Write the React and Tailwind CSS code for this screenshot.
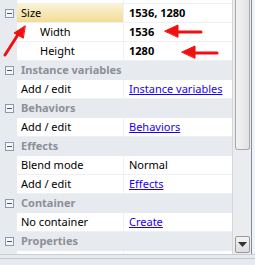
const rows = [
    { type: "prop", name: "Size", value: "1536, 1280", bold: true, selected: true, expand: true },
    { type: "prop", name: "Width", value: "1536", bold: true, indent: true },
    { type: "prop", name: "Height", value: "1280", bold: true, indent: true },
    { type: "cat", name: "Instance variables" },
    { type: "prop", name: "Add / edit", value: "Instance variables", link: true },
    { type: "cat", name: "Behaviors" },
    { type: "prop", name: "Add / edit", value: "Behaviors", link: true },
    { type: "cat", name: "Effects" },
    { type: "prop", name: "Blend mode", value: "Normal" },
    { type: "prop", name: "Add / edit", value: "Effects", link: true },
    { type: "cat", name: "Container" },
    { type: "prop", name: "No container", value: "Create", link: true },
    { type: "cat", name: "Properties" },
];

const MinusBox = () => (
    <div className="w-[9px] h-[9px] border border-[#8b98ad] bg-[#f4f6f9] flex items-center justify-center">
        <div className="w-[5px] h-px bg-[#4a5565]" />
    </div>
);

const Row = ({ row }) => {
    if (row.type === "cat") {
        return (
            <div className="flex h-[19px] bg-[#e7eaef] items-center">
                <div className="w-[17px] shrink-0 flex justify-center pl-px">
                    <MinusBox />
                </div>
                <span className="pl-[4px] font-bold text-[#8d9096]">{row.name}</span>
            </div>
        );
    }
    return (
        <div className="flex h-[19px]">
            <div className="w-[17px] shrink-0 bg-[#e7eaef] flex items-center justify-center pl-px">
                {row.expand && <MinusBox />}
            </div>
            <div
                className={
                    "w-[106px] shrink-0 flex items-center border-b border-[#eef0f2] " +
                    (row.selected ? "bg-gradient-to-b from-[#fbf2d4] to-[#f2dc95] " : "bg-white ") +
                    (row.indent ? "pl-[23px]" : "pl-[4px]")
                }
            >
                {row.name}
            </div>
            <div className="w-px shrink-0 bg-[#eef0f2]" />
            <div className="flex-1 bg-white flex items-center pl-[5px] border-b border-[#eef0f2]">
                {row.link ? (
                    <span className="text-[#1a00f5] underline underline-offset-[1px]">{row.value}</span>
                ) : (
                    <span className={row.bold ? "font-bold" : ""}>{row.value}</span>
                )}
            </div>
        </div>
    );
};

const Arrows = () => (
    <svg className="absolute inset-0 pointer-events-none" width="255" height="265">
        <g stroke="#f01010" strokeWidth="3" strokeLinecap="round" fill="#f01010">
            <line x1="5" y1="55" x2="19" y2="33" />
            <polygon points="25,26 14,33 23,38" strokeWidth="1" />
            <line x1="178" y1="32" x2="201" y2="32" />
            <polygon points="165,31 178,25 178,37" strokeWidth="1" />
            <line x1="195" y1="53" x2="217" y2="53" />
            <polygon points="182,52 195,46 195,58" strokeWidth="1" />
        </g>
    </svg>
);

export default function App() {
    return (
        <div className="relative w-[255px] h-[265px] overflow-hidden bg-[#e7eaef] text-[11px] text-black" style={{ fontFamily: '"Noto Sans", sans-serif' }}>
            <div className="flex h-[255px] border-b border-[#c9ced6]">
                <div className="w-[232px] flex flex-col">
                    <div className="flex h-[4px] shrink-0">
                        <div className="w-[17px] bg-[#e7eaef]" />
                        <div className="w-[106px] bg-white border-b border-[#eef0f2]" />
                        <div className="w-px bg-[#eef0f2]" />
                        <div className="flex-1 bg-white border-b border-[#eef0f2]" />
                    </div>
                    {rows.map((row, i) => (
                        <Row key={i} row={row} />
                    ))}
                    <div className="flex flex-1">
                        <div className="w-[17px] bg-[#e7eaef]" />
                        <div className="w-[106px] bg-white" />
                        <div className="w-px bg-[#eef0f2]" />
                        <div className="flex-1 bg-white" />
                    </div>
                </div>
                <div className="w-[19px] shrink-0 bg-[#eaecef] border-l border-[#d4d7dc] flex flex-col items-center pb-px">
                    <div className="w-[15px] h-[150px] bg-gradient-to-r from-[#f3f3f3] to-[#e2e2e2] border border-[#a9a9a9] border-t-0 rounded-b-[3px]" />
                    <div className="flex-1" />
                    <div className="w-[15px] h-[17px] bg-gradient-to-b from-[#f4f4f4] to-[#dcdcdc] border border-[#9a9a9a] rounded-[2px] flex items-center justify-center">
                        <svg width="9" height="5" viewBox="0 0 9 5">
                            <polygon points="0,0 9,0 4.5,5" fill="#333" />
                        </svg>
                    </div>
                </div>
                <div className="w-[4px] shrink-0 bg-[#f0f2f5] border-l border-[#7e8da3]" />
            </div>
            <div className="h-[3px]" />
            <div className="h-px bg-[#c4c9d1]" />
            <Arrows />
        </div>
    );
}
